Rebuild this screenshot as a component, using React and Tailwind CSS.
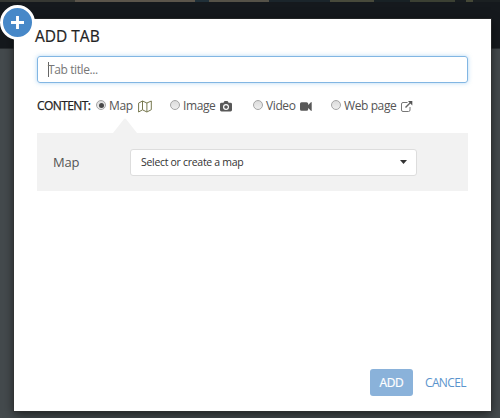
import React from "react";

function MapIcon() {
  return (
    <svg className="h-[13px] w-[14px] shrink-0" viewBox="0 0 14 13" fill="none" stroke="#77784f" strokeWidth="1">
      <path d="M.6 3.1 4.5 1 8.9 3 13.3 1v8.7L8.9 12 4.5 9.8.6 12ZM4.5 1v8.8M8.9 3v9" />
    </svg>
  );
}

function CameraIcon() {
  return (
    <svg className="h-[11px] w-[12px] shrink-0" viewBox="0 0 12 11">
      <path fill="#585858" d="M1.5 1.8h2L4.1.5Q4.3.1 4.8.1h2.5q.5 0 .7.4l.6 1.3h1.9q1.5 0 1.5 1.4v5.9q0 1.4-1.5 1.4h-9Q0 10.5 0 9.1V3.2q0-1.4 1.5-1.4Z" />
      <circle cx="6" cy="6" r="2.4" fill="#585858" stroke="#fff" strokeWidth="1.2" />
    </svg>
  );
}

function VideoIcon() {
  return (
    <svg className="h-[9px] w-[12px] shrink-0" viewBox="0 0 12 9" fill="#585858">
      <path d="M1.5.2h5q1.7 0 1.7 1.6v1.1L10.9.3q.8-.5.8.4v7.6q0 .9-.8.4L8.2 6.1v1.1q0 1.6-1.7 1.6h-5Q0 8.8 0 7.2V1.8Q0 .2 1.5.2Z" />
    </svg>
  );
}

function ExternalIcon() {
  return (
    <svg className="-mt-px h-[11px] w-[12px] shrink-0" viewBox="0 0 12 11" fill="none" stroke="#777">
      <path d="M6.5 1.5H2Q.5 1.5.5 3v6q0 1.5 1.5 1.5h5.500Q9 10.500 9 9V6" />
      <path d="M4.5 6.5 9.3 1.8" stroke="#666" strokeWidth="1.4" />
      <path d="M7 .1h4.300v4.300Z" fill="#555" stroke="none" />
    </svg>
  );
}

function Option({ label, checked, icon, className }) {
  return (
    <label className={`flex h-4 items-center whitespace-nowrap ${className}`}>
      <span className="-mt-[2px] flex size-[10px] shrink-0 items-center justify-center rounded-full border border-[#a5a5a5] bg-linear-to-b from-[#dcdcdc] to-[#eeeeee]">
        {checked && <span className="size-[5px] rounded-full bg-[#484848]" />}
      </span>
      <span className="-mt-px ml-[3px] text-[12px] leading-4 tracking-[-0.400px] text-[#555]">{label}</span>
      <span className="ml-[5px] mt-px">{icon}</span>
    </label>
  );
}

export default function App() {
  return (
    <div className="relative h-[418px] w-[500px] overflow-hidden bg-[#444a4d] font-['Open_Sans','Noto_Sans',sans-serif]">
      <div className="flex h-[2px]">
        <div className="w-[75px] bg-[#363833]" />
        <div className="w-[120px] bg-[#5b554b]" />
        <div className="w-[14px] bg-[#203039]" />
        <div className="w-[60px] bg-[#555248]" />
        <div className="w-[61px] bg-[#1b252b]" />
        <div className="w-[44px] bg-[#484a3b]" />
        <div className="w-[36px] bg-[#182125]" />
        <div className="w-[45px] bg-[#3b4033]" />
        <div className="w-[11px] bg-[#181d20]" />
        <div className="w-[7px] bg-[#454837]" />
        <div className="flex-1 bg-[#1b2022]" />
      </div>
      <div className="h-[47px] border-b border-[#292d30] bg-[#15191d]" />

      <main className="absolute left-[14px] top-[19px] flex h-[392px] w-[477px] flex-col bg-white pl-[23px] pr-[23px] shadow-[0_0_0_1px_rgba(50,50,50,0.55),0_3px_10px_rgba(0,0,0,0.6)]">
        <h1 className="-ml-[2px] mt-[7px] h-5 text-[15.500px] leading-5 text-[#222] [-webkit-text-stroke:0.200px_#222]">ADD TAB</h1>
        <div className="mt-[10px] flex h-[27px] shrink-0 items-center rounded-[3px] border border-[#82b6e3] pl-[10px] shadow-[0_0_4px_rgba(102,175,233,0.5)]">
          <span className="-mr-px h-[15px] w-px bg-[#666]" />
          <span className="text-[12px] leading-4 tracking-[-0.400px] text-[#777]">Tab title...</span>
        </div>

        <div className="mt-[15px] flex h-4 shrink-0 items-center">
          <span className="-mt-px w-[59px] whitespace-nowrap text-[12px] leading-4 tracking-[-0.600px] text-[#222] [-webkit-text-stroke:0.250px_#222]">CONTENT:</span>
          <Option className="w-[74px]" label="Map" checked icon={<MapIcon />} />
          <Option className="w-[83px]" label="Image" icon={<CameraIcon />} />
          <Option className="w-[78px]" label="Video" icon={<VideoIcon />} />
          <Option className="" label="Web page" icon={<ExternalIcon />} />
        </div>

        <svg className="ml-[76px] mt-[4px] h-[15px] w-[24px] shrink-0" viewBox="0 0 24 15">
          <path d="M0 15 11 1Q12 0 13 1L24 15Z" fill="#f2f2f2" />
        </svg>
        <section className="flex h-[58px] shrink-0 items-center bg-[#f2f2f2] pl-4">
          <span className="w-[77px] text-[13px] leading-5 tracking-[-0.200px] text-[#555]">Map</span>
          <div className="flex h-[27px] w-[287px] items-center justify-between rounded-[3px] border border-[#ddd] bg-white pl-[10px] pr-[9px]">
            <span className="text-[10.500px] leading-4 tracking-[-0.300px] text-[#333]">Select or create a map</span>
            <svg className="h-[4px] w-[7px]" viewBox="0 0 7 4">
              <path d="M0 0h7L3.500 4Z" fill="#333" />
            </svg>
          </div>
        </section>

        <footer className="mb-[15px] mt-auto flex items-center justify-end">
          <button className="h-[27px] w-[43px] rounded-[3px] bg-[#8ab2da] text-[12px] leading-4 tracking-[-0.400px] text-white [-webkit-text-stroke:0.200px_white]">ADD</button>
          <button className="ml-[12px] mr-[2px] whitespace-nowrap text-[12px] leading-4 tracking-[-0.600px] text-[#5a94cd]">CANCEL</button>
        </footer>
      </main>

      <div className="absolute left-0 top-[5px] flex size-[35px] items-center justify-center rounded-full border-[3px] border-white bg-[#4788c8]">
        <svg className="size-[13px]" viewBox="0 0 13 13">
          <path d="M6.500 0v13M0 6.500h13" stroke="#fff" strokeWidth="2.900" />
        </svg>
      </div>
    </div>
  );
}
